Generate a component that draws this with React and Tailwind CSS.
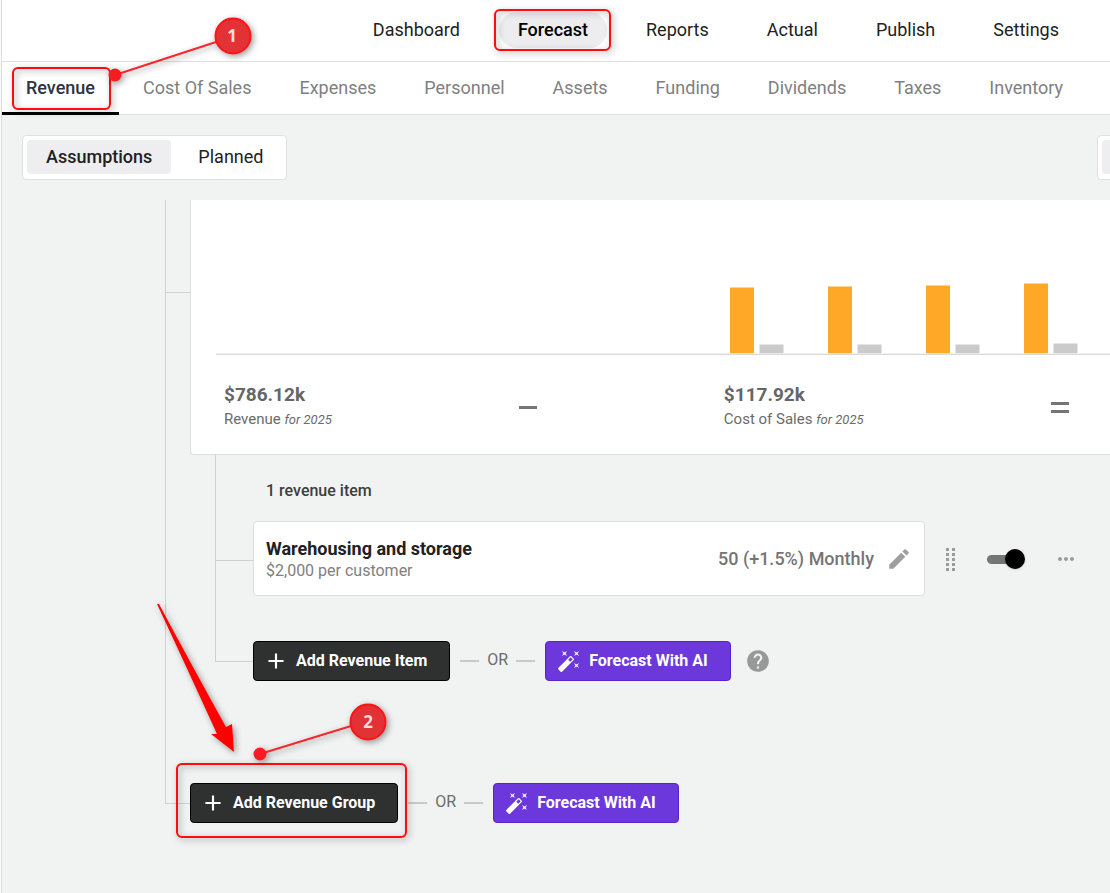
import React, { useState } from 'react';
import { MdAdd, MdAutoFixHigh, MdEdit, MdHelp, MdMoreHoriz } from 'react-icons/md';

const mainNav = ['Dashboard', 'Forecast', 'Reports', 'Actual', 'Publish', 'Settings'];
const subNav = ['Revenue', 'Cost Of Sales', 'Expenses', 'Personnel', 'Assets', 'Funding', 'Dividends', 'Taxes', 'Inventory'];

const bars = [
    { x: 514, revenue: 66, cost: 9 },
    { x: 612, revenue: 67, cost: 9 },
    { x: 710, revenue: 68, cost: 9 },
    { x: 808, revenue: 70, cost: 10 },
];

// Tree gutter: vertical line with a branch to the row on its right
const Branch = ({ width, top, last }) => (
    <div className={`${width} shrink-0 flex flex-col`}>
        <div className={`${top} border-l border-b border-[#cfd1d1]`} />
        {!last && <div className="flex-1 border-l border-[#cfd1d1]" />}
    </div>
);

const AddButton = ({ children }) => (
    <button className="h-10 flex items-center gap-[7px] pl-[9px] pr-[22px] rounded bg-[#2f3130] border border-black text-white font-bold">
        <MdAdd className="w-[26px] h-[26px]" />
        <span>{children}</span>
    </button>
);

const AiButton = () => (
    <button className="h-10 flex items-center gap-2 pl-[11px] pr-[22px] rounded bg-[#6c38dc] border border-[#5a22cf] text-white font-bold">
        <MdAutoFixHigh className="w-6 h-6" />
        <span>Forecast With AI</span>
    </button>
);

const Or = () => (
    <div className="flex items-center gap-2 px-[10px] text-[#6b6c6c]">
        <span className="w-[19px] h-[2px] bg-[#c8c9c9]" />
        <span className="-mt-[2px]">OR</span>
        <span className="w-[19px] h-[2px] bg-[#c8c9c9]" />
    </div>
);

const Stat = ({ value, label }) => (
    <div className="whitespace-nowrap text-[#6b6b6b]">
        <p className="text-[19px] leading-6 font-bold text-[#666]">{value}</p>
        <p className="text-[15px] leading-6">
            {label} <em className="text-[13px]">for 2025</em>
        </p>
    </div>
);

const Chart = () => (
    <svg className="w-full h-[155px] block" role="img" aria-label="Revenue and cost of sales">
        {bars.map((b) => (
            <g key={b.x}>
                <rect x={b.x} y={153.5 - b.revenue} width="24" height={b.revenue} fill="#ffa726" />
                <rect x={b.x + 29.5} y={153.5 - b.cost} width="24" height={b.cost} fill="#cbcbcb" />
            </g>
        ))}
        <rect y="153" width="100%" height="1" fill="#ececec" fillOpacity="0.6" />
        <rect y="154" width="100%" height="1" fill="#d9d9d9" />
    </svg>
);

const DragHandle = () => (
    <svg width="9" height="25" viewBox="0 0 9 25" fill="#9a9b9b">
        {[2, 7, 12, 17, 22].map((y) => (
            <g key={y}>
                <rect x="0" y={y} width="3" height="3" />
                <rect x="6" y={y} width="3" height="3" />
            </g>
        ))}
    </svg>
);

const Annotations = () => (
    <svg className="absolute top-0 left-0 w-[480px] h-[860px] pointer-events-none overflow-visible" fontFamily="'Open Sans', sans-serif">
        <defs>
            <filter id="shadow" x="-30%" y="-30%" width="160%" height="160%">
                <feDropShadow dx="2" dy="2" stdDeviation="3" floodColor="#000" floodOpacity="0.4" />
            </filter>
        </defs>
        <g fill="none" stroke="#ff0808" strokeWidth="2" filter="url(#shadow)">
            <rect x="13" y="68" width="97" height="41" rx="5" />
            <rect x="495" y="10" width="115" height="40" rx="5" />
            <rect x="177" y="764" width="229" height="73" rx="5" />
        </g>
        <path
            d="M157 604 L159 604 Q190 662 226 727 L232 724 L234 752 L211 734 L217 734 Q186 666 157 604Z"
            fill="#ff0000"
            filter="url(#shadow)"
        />
        <g filter="url(#shadow)">
            <path d="M115 75 L216 42 M260 754 L351 726" stroke="#f5282d" strokeWidth="2" />
            <circle cx="115" cy="75" r="6.5" fill="#f51d22" />
            <circle cx="260" cy="754" r="6.5" fill="#f51d22" />
            <circle cx="233" cy="36" r="17.5" fill="#e23335" stroke="#fb1216" strokeWidth="2" />
            <circle cx="368" cy="722" r="17.5" fill="#e23335" stroke="#fb1216" strokeWidth="2" />
        </g>
        <g fill="#fbdcdc" fontSize="17" fontWeight="700" textAnchor="middle">
            <text x="232" y="42">1</text>
            <text x="368" y="728">2</text>
        </g>
    </svg>
);

const App = () => {
    const [view, setView] = useState('Assumptions');
    const [enabled, setEnabled] = useState(true);

    return (
        <div className="relative min-h-screen overflow-hidden pl-px bg-[#fafafa] font-['Roboto',sans-serif] text-base text-[#212121]">
            <div className="min-h-screen border-l border-[#dcdddd] bg-[#f1f3f2]">
                {/* Main navigation */}
                <header className="h-[62px] pb-[2px] bg-white border-b border-[#e0e0e0] flex items-center justify-end pr-8">
                    <nav className="flex gap-5">
                        {mainNav.map((item) => (
                            <a
                                key={item}
                                href="#"
                                className={`h-9 px-[19px] flex items-center rounded-full text-lg ${item === 'Forecast' ? 'bg-[#ededef] text-black font-medium' : ''}`}
                            >
                                {item}
                            </a>
                        ))}
                    </nav>
                </header>

                <nav className="h-[53px] bg-white border-b border-[#e0e0e0] flex">
                    {subNav.map((item) => (
                        <a
                            key={item}
                            href="#"
                            className={`h-[53px] pt-[2px] px-6 flex items-center text-lg whitespace-nowrap border-b-3 ${item === 'Revenue' ? 'border-black text-[#2f3440] font-medium' : 'border-transparent text-[#808080]'}`}
                        >
                            {item}
                        </a>
                    ))}
                </nav>

                {/* Toolbar */}
                <div className="h-[85px] pt-5 pl-5 flex justify-between">
                    <div className="h-[45px] p-1 flex bg-white border border-[#dfe0e0] rounded">
                        {['Assumptions', 'Planned'].map((item) => (
                            <button
                                key={item}
                                onClick={() => setView(item)}
                                className={`h-[34px] pr-[19px] rounded text-lg leading-6 ${view === item ? 'pl-[19px] bg-[#eeeef0] font-medium' : 'pl-[27px]'}`}
                            >
                                {item}
                            </button>
                        ))}
                    </div>
                    <div className="w-[13px] overflow-hidden">
                        <div className="w-24 h-[45px] p-1 bg-white border border-[#dfe0e0] rounded">
                            <div className="h-[34px] bg-[#eeeef0] rounded" />
                        </div>
                    </div>
                </div>

                <main className="pl-[163px]">
                    <div className="flex">
                        <Branch width="w-[25px]" top="h-[93px]" />
                        <section className="flex-1 min-w-0 overflow-hidden bg-white border-l border-b border-[#dcdddd] rounded-bl">
                            <div className="pl-[25px]">
                                <Chart />
                                <div className="h-[99px] pl-2 pt-7 flex gap-[187px]">
                                    <Stat value="$786.12k" label="Revenue" />
                                    <span className="w-[18px] h-[3px] mt-[23px] shrink-0 bg-[#757575]" />
                                    <Stat value="$117.92k" label="Cost of Sales" />
                                    <span className="w-[18px] h-[11px] mt-[19px] shrink-0 border-y-3 border-[#757575]" />
                                </div>
                            </div>
                        </section>
                    </div>

                    <div className="flex">
                        <div className="w-[50px] shrink-0 border-l border-[#cfd1d1]" />
                        <div className="flex-1 min-w-0 pb-[102px]">
                            <div className="h-[66px] pl-[50px] pt-6 border-l border-[#cfd1d1]">
                                <h2 className="font-medium text-[#3c3d3d]">1 revenue item</h2>
                            </div>

                            <div className="flex">
                                <Branch width="w-[38px]" top="h-10" />
                                <article className="flex-1 h-[75px] px-3 flex items-center justify-between bg-white border border-[#dcdddd] rounded">
                                    <div>
                                        <h3 className="text-lg leading-6 font-bold">Warehousing and storage</h3>
                                        <p className="leading-5 text-[#808080]">$2,000 per customer</p>
                                    </div>
                                    <div className="flex items-center gap-3 text-lg font-medium text-[#757575]">
                                        <span>50 (+1.5%) Monthly</span>
                                        <button aria-label="Edit item">
                                            <MdEdit className="w-[26px] h-[26px] text-[#9e9e9e]" />
                                        </button>
                                    </div>
                                </article>
                                <div className="w-[185px] pl-[21px] flex items-center">
                                    <DragHandle />
                                    <input
                                        type="checkbox"
                                        role="switch"
                                        aria-label="Include item"
                                        checked={enabled}
                                        onChange={() => setEnabled(!enabled)}
                                        className="relative appearance-none w-[38px] h-5 ml-8 before:absolute before:left-0 before:top-[6px] before:w-[34px] before:h-[9px] before:rounded-full before:bg-[#757575] after:absolute after:left-0 checked:after:left-[18px] after:top-0 after:w-5 after:h-5 after:rounded-full after:bg-black after:shadow"
                                    />
                                    <button className="ml-[29px]" aria-label="More options">
                                        <MdMoreHoriz className="w-6 h-6 text-[#9a9b9b]" />
                                    </button>
                                </div>
                            </div>

                            <div className="h-[45px] border-l border-[#cfd1d1]" />

                            <div className="flex">
                                <Branch width="w-[38px]" top="h-[21px]" last />
                                <AddButton>Add Revenue Item</AddButton>
                                <Or />
                                <AiButton />
                                <button className="ml-[14px]" aria-label="Help">
                                    <MdHelp className="w-[26px] h-[26px] text-[#979999]" />
                                </button>
                            </div>
                        </div>
                    </div>

                    <div className="flex">
                        <Branch width="w-[25px]" top="h-[21px]" last />
                        <AddButton>Add Revenue Group</AddButton>
                        <Or />
                        <AiButton />
                    </div>
                </main>
            </div>
            <Annotations />
        </div>
    );
};

export default App;
